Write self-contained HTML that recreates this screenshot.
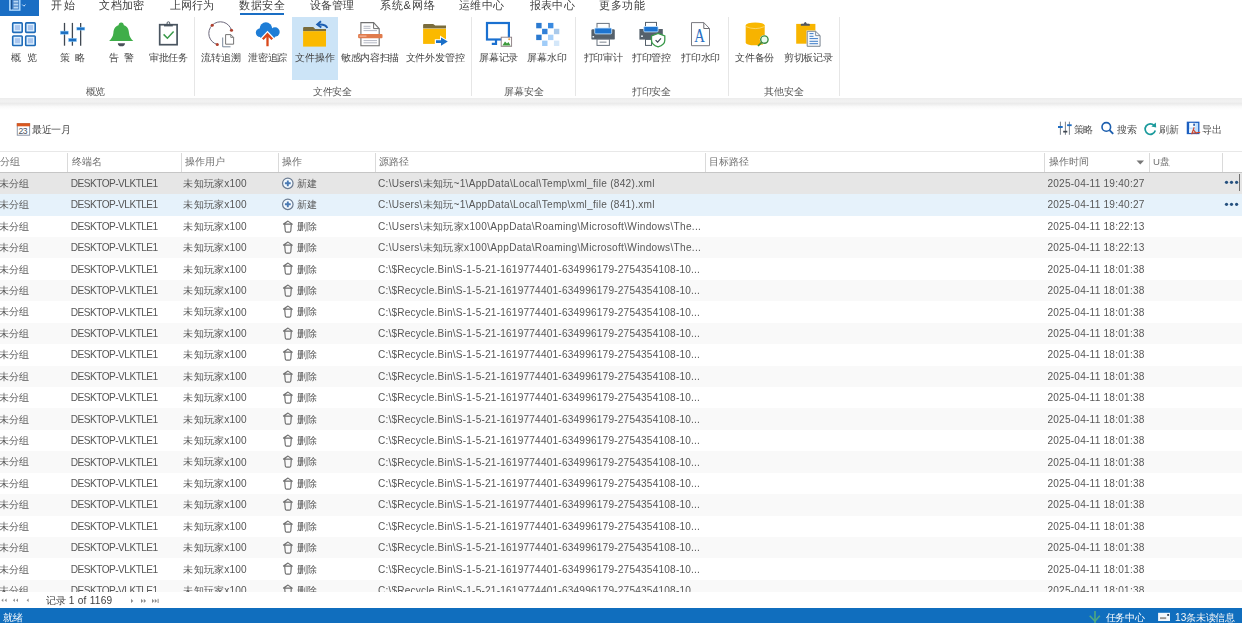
<!DOCTYPE html>
<html><head><meta charset="utf-8"><style>
*{margin:0;padding:0;box-sizing:border-box}
html,body{width:1242px;height:623px;overflow:hidden;background:#fff;font-family:'Liberation Sans', sans-serif;}
.a{position:absolute;white-space:nowrap}
.t{filter:grayscale(1)}
.sep{position:absolute;top:17px;height:79px;width:1px;background:#e6e6e6}
.hsep{position:absolute;top:153px;height:19px;width:1px;background:#dadada}
.row{position:absolute;left:0;width:1242px;height:21.43px;overflow:visible}
</style></head>
<body>
<div class="a" style="left:0;top:0;width:38.6px;height:15.5px;background:#1a6ec4"></div><svg class="a" style="left:0;top:0" width="39" height="16"><rect x="9.8" y="-2" width="10" height="12.1" fill="#3d7fc8" stroke="#b4ddff" stroke-width="1.4"/><line x1="11.6" y1="-1" x2="11.6" y2="9.4" stroke="#12407a" stroke-width="0.8"/><rect x="13.2" y="-1" width="5.3" height="10.3" fill="#5a90cc"/><g stroke="#b8d6f4" stroke-width="1.6"><line x1="13.6" y1="1.6" x2="18.2" y2="1.6"/><line x1="13.6" y1="4.6" x2="18.2" y2="4.6"/><line x1="13.6" y1="7.6" x2="18.2" y2="7.6"/></g><path d="M22.3 4.6l1.6 1.6 1.6-1.6" stroke="#cfe6ff" fill="none" stroke-width="1"/></svg><div class="a" style="left:240.2px;top:13.4px;width:43.8px;height:2px;background:#1a6ec4"></div><div class="a" style="left:292.4px;top:17.2px;width:45.8px;height:62.6px;background:#cce4f7"></div><div class="sep" style="left:194.3px"></div><div class="sep" style="left:471.4px"></div><div class="sep" style="left:575.0px"></div><div class="sep" style="left:727.9px"></div><div class="sep" style="left:838.8px"></div><div class="a" style="left:0;top:97.5px;width:1242px;height:8px;background:linear-gradient(#ececec,#f2f2f2 40%,#ebebeb 70%,#f6f6f6)"></div><div class="a" style="left:0;top:105.5px;width:1242px;height:4px;background:linear-gradient(#f8f8f8,#fff)"></div><div class="a" style="left:0;top:151px;width:1242px;height:1px;background:#e8e8e8"></div><div class="a" style="left:0;top:172px;width:1242px;height:1px;background:#c6c6c6"></div><div class="hsep" style="left:67.0px"></div><div class="hsep" style="left:180.8px"></div><div class="hsep" style="left:277.8px"></div><div class="hsep" style="left:375.0px"></div><div class="hsep" style="left:704.6px"></div><div class="hsep" style="left:1044.4px"></div><div class="hsep" style="left:1148.7px"></div><div class="hsep" style="left:1221.8px"></div><svg class="a" style="left:1136px;top:159.5px" width="9" height="5"><path d="M0.5 0.5h7.5l-3.75 4z" fill="#777"/></svg><div class="a" style="left:0;top:608px;width:1242px;height:15px;background:#106ebe"></div><div class="a" style="left:0;top:172.7px;width:1242px;height:419.6px;overflow:hidden"><div class="row" style="top:0.000px;background:#e6e6e6"><div class="a t" style="left:-1.18px;top:6.13px;font-size:9.65px;line-height:9.65px;letter-spacing:-0.117px;color:#575757;">未分组</div><div class="a t" style="left:70.80px;top:6.35px;font-size:10.1px;line-height:10.1px;letter-spacing:-0.515px;color:#575757;">DESKTOP-VLKTLE1</div><div class="a t" style="left:183.42px;top:6.13px;font-size:9.65px;line-height:9.65px;letter-spacing:0.355px;color:#575757;">未知玩家</div><div class="a t" style="left:224.30px;top:6.35px;font-size:10.1px;line-height:10.1px;letter-spacing:0.106px;color:#575757;">x100</div><div class="a t" style="left:297.32px;top:6.13px;font-size:9.65px;line-height:9.65px;letter-spacing:0.065px;color:#575757;">新建</div><div class="a t" style="left:378.00px;top:6.35px;font-size:10.1px;line-height:10.1px;letter-spacing:0.285px;color:#575757;">C:\Users\未知玩~1\AppData\Local\Temp\xml_file (842).xml</div><div class="a t" style="left:1047.39px;top:6.35px;font-size:10.1px;line-height:10.1px;letter-spacing:0.224px;color:#575757;">2025-04-11 19:40:27</div><svg class="a" style="left:281px;top:4px" width="14" height="14"><circle cx="6.8" cy="6.3" r="5.25" fill="#f2f9ff" stroke="#6c7c92" stroke-width="1.25"/><path d="M6.8 3.4v5.8M3.9 6.3h5.8" stroke="#4a7ab4" stroke-width="1.9"/></svg><svg class="a" style="left:1223px;top:7.8px" width="17" height="5"><circle cx="3.5" cy="2.3" r="1.6" fill="#25507e"/><circle cx="8.5" cy="2.3" r="1.6" fill="#25507e"/><circle cx="13.6" cy="2.3" r="1.6" fill="#25507e"/></svg></div><div class="row" style="top:21.430px;background:#e6f2fb"><div class="a t" style="left:-1.18px;top:6.13px;font-size:9.65px;line-height:9.65px;letter-spacing:-0.117px;color:#575757;">未分组</div><div class="a t" style="left:70.80px;top:6.35px;font-size:10.1px;line-height:10.1px;letter-spacing:-0.515px;color:#575757;">DESKTOP-VLKTLE1</div><div class="a t" style="left:183.42px;top:6.13px;font-size:9.65px;line-height:9.65px;letter-spacing:0.355px;color:#575757;">未知玩家</div><div class="a t" style="left:224.30px;top:6.35px;font-size:10.1px;line-height:10.1px;letter-spacing:0.106px;color:#575757;">x100</div><div class="a t" style="left:297.32px;top:6.13px;font-size:9.65px;line-height:9.65px;letter-spacing:0.065px;color:#575757;">新建</div><div class="a t" style="left:378.00px;top:6.35px;font-size:10.1px;line-height:10.1px;letter-spacing:0.285px;color:#575757;">C:\Users\未知玩~1\AppData\Local\Temp\xml_file (841).xml</div><div class="a t" style="left:1047.39px;top:6.35px;font-size:10.1px;line-height:10.1px;letter-spacing:0.224px;color:#575757;">2025-04-11 19:40:27</div><svg class="a" style="left:281px;top:4px" width="14" height="14"><circle cx="6.8" cy="6.3" r="5.25" fill="#f2f9ff" stroke="#6c7c92" stroke-width="1.25"/><path d="M6.8 3.4v5.8M3.9 6.3h5.8" stroke="#4a7ab4" stroke-width="1.9"/></svg><svg class="a" style="left:1223px;top:7.8px" width="17" height="5"><circle cx="3.5" cy="2.3" r="1.6" fill="#25507e"/><circle cx="8.5" cy="2.3" r="1.6" fill="#25507e"/><circle cx="13.6" cy="2.3" r="1.6" fill="#25507e"/></svg></div><div class="row" style="top:42.860px;background:#ffffff"><div class="a t" style="left:-1.18px;top:6.13px;font-size:9.65px;line-height:9.65px;letter-spacing:-0.117px;color:#575757;">未分组</div><div class="a t" style="left:70.80px;top:6.35px;font-size:10.1px;line-height:10.1px;letter-spacing:-0.515px;color:#575757;">DESKTOP-VLKTLE1</div><div class="a t" style="left:183.42px;top:6.13px;font-size:9.65px;line-height:9.65px;letter-spacing:0.355px;color:#575757;">未知玩家</div><div class="a t" style="left:224.30px;top:6.35px;font-size:10.1px;line-height:10.1px;letter-spacing:0.106px;color:#575757;">x100</div><div class="a t" style="left:297.32px;top:6.13px;font-size:9.65px;line-height:9.65px;letter-spacing:0.065px;color:#575757;">删除</div><div class="a t" style="left:378.00px;top:6.35px;font-size:10.1px;line-height:10.1px;letter-spacing:0.308px;color:#575757;">C:\Users\未知玩家x100\AppData\Roaming\Microsoft\Windows\The...</div><div class="a t" style="left:1047.39px;top:6.35px;font-size:10.1px;line-height:10.1px;letter-spacing:0.224px;color:#575757;">2025-04-11 18:22:13</div><svg class="a" style="left:280px;top:0" width="16" height="21"><g transform="translate(-280,0)" fill="none" stroke="#6e6e6e" stroke-width="1.15" stroke-linejoin="round"><path d="M283.5 8.1 L288 5.1 L292.3 8.1 Z"/><path d="M284.7 8.3 L285.3 15 Q285.5 16.1 286.6 16.1 H289.5 Q290.6 16.1 290.8 15 L291.3 8.3"/></g></svg></div><div class="row" style="top:64.290px;background:#f9f9f9"><div class="a t" style="left:-1.18px;top:6.13px;font-size:9.65px;line-height:9.65px;letter-spacing:-0.117px;color:#575757;">未分组</div><div class="a t" style="left:70.80px;top:6.35px;font-size:10.1px;line-height:10.1px;letter-spacing:-0.515px;color:#575757;">DESKTOP-VLKTLE1</div><div class="a t" style="left:183.42px;top:6.13px;font-size:9.65px;line-height:9.65px;letter-spacing:0.355px;color:#575757;">未知玩家</div><div class="a t" style="left:224.30px;top:6.35px;font-size:10.1px;line-height:10.1px;letter-spacing:0.106px;color:#575757;">x100</div><div class="a t" style="left:297.32px;top:6.13px;font-size:9.65px;line-height:9.65px;letter-spacing:0.065px;color:#575757;">删除</div><div class="a t" style="left:378.00px;top:6.35px;font-size:10.1px;line-height:10.1px;letter-spacing:0.308px;color:#575757;">C:\Users\未知玩家x100\AppData\Roaming\Microsoft\Windows\The...</div><div class="a t" style="left:1047.39px;top:6.35px;font-size:10.1px;line-height:10.1px;letter-spacing:0.224px;color:#575757;">2025-04-11 18:22:13</div><svg class="a" style="left:280px;top:0" width="16" height="21"><g transform="translate(-280,0)" fill="none" stroke="#6e6e6e" stroke-width="1.15" stroke-linejoin="round"><path d="M283.5 8.1 L288 5.1 L292.3 8.1 Z"/><path d="M284.7 8.3 L285.3 15 Q285.5 16.1 286.6 16.1 H289.5 Q290.6 16.1 290.8 15 L291.3 8.3"/></g></svg></div><div class="row" style="top:85.720px;background:#ffffff"><div class="a t" style="left:-1.18px;top:6.13px;font-size:9.65px;line-height:9.65px;letter-spacing:-0.117px;color:#575757;">未分组</div><div class="a t" style="left:70.80px;top:6.35px;font-size:10.1px;line-height:10.1px;letter-spacing:-0.515px;color:#575757;">DESKTOP-VLKTLE1</div><div class="a t" style="left:183.42px;top:6.13px;font-size:9.65px;line-height:9.65px;letter-spacing:0.355px;color:#575757;">未知玩家</div><div class="a t" style="left:224.30px;top:6.35px;font-size:10.1px;line-height:10.1px;letter-spacing:0.106px;color:#575757;">x100</div><div class="a t" style="left:297.32px;top:6.13px;font-size:9.65px;line-height:9.65px;letter-spacing:0.065px;color:#575757;">删除</div><div class="a t" style="left:378.00px;top:6.35px;font-size:10.1px;line-height:10.1px;letter-spacing:0.199px;color:#575757;">C:\$Recycle.Bin\S-1-5-21-1619774401-634996179-2754354108-10...</div><div class="a t" style="left:1047.39px;top:6.35px;font-size:10.1px;line-height:10.1px;letter-spacing:0.224px;color:#575757;">2025-04-11 18:01:38</div><svg class="a" style="left:280px;top:0" width="16" height="21"><g transform="translate(-280,0)" fill="none" stroke="#6e6e6e" stroke-width="1.15" stroke-linejoin="round"><path d="M283.5 8.1 L288 5.1 L292.3 8.1 Z"/><path d="M284.7 8.3 L285.3 15 Q285.5 16.1 286.6 16.1 H289.5 Q290.6 16.1 290.8 15 L291.3 8.3"/></g></svg></div><div class="row" style="top:107.150px;background:#f9f9f9"><div class="a t" style="left:-1.18px;top:6.13px;font-size:9.65px;line-height:9.65px;letter-spacing:-0.117px;color:#575757;">未分组</div><div class="a t" style="left:70.80px;top:6.35px;font-size:10.1px;line-height:10.1px;letter-spacing:-0.515px;color:#575757;">DESKTOP-VLKTLE1</div><div class="a t" style="left:183.42px;top:6.13px;font-size:9.65px;line-height:9.65px;letter-spacing:0.355px;color:#575757;">未知玩家</div><div class="a t" style="left:224.30px;top:6.35px;font-size:10.1px;line-height:10.1px;letter-spacing:0.106px;color:#575757;">x100</div><div class="a t" style="left:297.32px;top:6.13px;font-size:9.65px;line-height:9.65px;letter-spacing:0.065px;color:#575757;">删除</div><div class="a t" style="left:378.00px;top:6.35px;font-size:10.1px;line-height:10.1px;letter-spacing:0.199px;color:#575757;">C:\$Recycle.Bin\S-1-5-21-1619774401-634996179-2754354108-10...</div><div class="a t" style="left:1047.39px;top:6.35px;font-size:10.1px;line-height:10.1px;letter-spacing:0.224px;color:#575757;">2025-04-11 18:01:38</div><svg class="a" style="left:280px;top:0" width="16" height="21"><g transform="translate(-280,0)" fill="none" stroke="#6e6e6e" stroke-width="1.15" stroke-linejoin="round"><path d="M283.5 8.1 L288 5.1 L292.3 8.1 Z"/><path d="M284.7 8.3 L285.3 15 Q285.5 16.1 286.6 16.1 H289.5 Q290.6 16.1 290.8 15 L291.3 8.3"/></g></svg></div><div class="row" style="top:128.580px;background:#ffffff"><div class="a t" style="left:-1.18px;top:6.13px;font-size:9.65px;line-height:9.65px;letter-spacing:-0.117px;color:#575757;">未分组</div><div class="a t" style="left:70.80px;top:6.35px;font-size:10.1px;line-height:10.1px;letter-spacing:-0.515px;color:#575757;">DESKTOP-VLKTLE1</div><div class="a t" style="left:183.42px;top:6.13px;font-size:9.65px;line-height:9.65px;letter-spacing:0.355px;color:#575757;">未知玩家</div><div class="a t" style="left:224.30px;top:6.35px;font-size:10.1px;line-height:10.1px;letter-spacing:0.106px;color:#575757;">x100</div><div class="a t" style="left:297.32px;top:6.13px;font-size:9.65px;line-height:9.65px;letter-spacing:0.065px;color:#575757;">删除</div><div class="a t" style="left:378.00px;top:6.35px;font-size:10.1px;line-height:10.1px;letter-spacing:0.199px;color:#575757;">C:\$Recycle.Bin\S-1-5-21-1619774401-634996179-2754354108-10...</div><div class="a t" style="left:1047.39px;top:6.35px;font-size:10.1px;line-height:10.1px;letter-spacing:0.224px;color:#575757;">2025-04-11 18:01:38</div><svg class="a" style="left:280px;top:0" width="16" height="21"><g transform="translate(-280,0)" fill="none" stroke="#6e6e6e" stroke-width="1.15" stroke-linejoin="round"><path d="M283.5 8.1 L288 5.1 L292.3 8.1 Z"/><path d="M284.7 8.3 L285.3 15 Q285.5 16.1 286.6 16.1 H289.5 Q290.6 16.1 290.8 15 L291.3 8.3"/></g></svg></div><div class="row" style="top:150.010px;background:#f9f9f9"><div class="a t" style="left:-1.18px;top:6.13px;font-size:9.65px;line-height:9.65px;letter-spacing:-0.117px;color:#575757;">未分组</div><div class="a t" style="left:70.80px;top:6.35px;font-size:10.1px;line-height:10.1px;letter-spacing:-0.515px;color:#575757;">DESKTOP-VLKTLE1</div><div class="a t" style="left:183.42px;top:6.13px;font-size:9.65px;line-height:9.65px;letter-spacing:0.355px;color:#575757;">未知玩家</div><div class="a t" style="left:224.30px;top:6.35px;font-size:10.1px;line-height:10.1px;letter-spacing:0.106px;color:#575757;">x100</div><div class="a t" style="left:297.32px;top:6.13px;font-size:9.65px;line-height:9.65px;letter-spacing:0.065px;color:#575757;">删除</div><div class="a t" style="left:378.00px;top:6.35px;font-size:10.1px;line-height:10.1px;letter-spacing:0.199px;color:#575757;">C:\$Recycle.Bin\S-1-5-21-1619774401-634996179-2754354108-10...</div><div class="a t" style="left:1047.39px;top:6.35px;font-size:10.1px;line-height:10.1px;letter-spacing:0.224px;color:#575757;">2025-04-11 18:01:38</div><svg class="a" style="left:280px;top:0" width="16" height="21"><g transform="translate(-280,0)" fill="none" stroke="#6e6e6e" stroke-width="1.15" stroke-linejoin="round"><path d="M283.5 8.1 L288 5.1 L292.3 8.1 Z"/><path d="M284.7 8.3 L285.3 15 Q285.5 16.1 286.6 16.1 H289.5 Q290.6 16.1 290.8 15 L291.3 8.3"/></g></svg></div><div class="row" style="top:171.440px;background:#ffffff"><div class="a t" style="left:-1.18px;top:6.13px;font-size:9.65px;line-height:9.65px;letter-spacing:-0.117px;color:#575757;">未分组</div><div class="a t" style="left:70.80px;top:6.35px;font-size:10.1px;line-height:10.1px;letter-spacing:-0.515px;color:#575757;">DESKTOP-VLKTLE1</div><div class="a t" style="left:183.42px;top:6.13px;font-size:9.65px;line-height:9.65px;letter-spacing:0.355px;color:#575757;">未知玩家</div><div class="a t" style="left:224.30px;top:6.35px;font-size:10.1px;line-height:10.1px;letter-spacing:0.106px;color:#575757;">x100</div><div class="a t" style="left:297.32px;top:6.13px;font-size:9.65px;line-height:9.65px;letter-spacing:0.065px;color:#575757;">删除</div><div class="a t" style="left:378.00px;top:6.35px;font-size:10.1px;line-height:10.1px;letter-spacing:0.199px;color:#575757;">C:\$Recycle.Bin\S-1-5-21-1619774401-634996179-2754354108-10...</div><div class="a t" style="left:1047.39px;top:6.35px;font-size:10.1px;line-height:10.1px;letter-spacing:0.224px;color:#575757;">2025-04-11 18:01:38</div><svg class="a" style="left:280px;top:0" width="16" height="21"><g transform="translate(-280,0)" fill="none" stroke="#6e6e6e" stroke-width="1.15" stroke-linejoin="round"><path d="M283.5 8.1 L288 5.1 L292.3 8.1 Z"/><path d="M284.7 8.3 L285.3 15 Q285.5 16.1 286.6 16.1 H289.5 Q290.6 16.1 290.8 15 L291.3 8.3"/></g></svg></div><div class="row" style="top:192.870px;background:#f9f9f9"><div class="a t" style="left:-1.18px;top:6.13px;font-size:9.65px;line-height:9.65px;letter-spacing:-0.117px;color:#575757;">未分组</div><div class="a t" style="left:70.80px;top:6.35px;font-size:10.1px;line-height:10.1px;letter-spacing:-0.515px;color:#575757;">DESKTOP-VLKTLE1</div><div class="a t" style="left:183.42px;top:6.13px;font-size:9.65px;line-height:9.65px;letter-spacing:0.355px;color:#575757;">未知玩家</div><div class="a t" style="left:224.30px;top:6.35px;font-size:10.1px;line-height:10.1px;letter-spacing:0.106px;color:#575757;">x100</div><div class="a t" style="left:297.32px;top:6.13px;font-size:9.65px;line-height:9.65px;letter-spacing:0.065px;color:#575757;">删除</div><div class="a t" style="left:378.00px;top:6.35px;font-size:10.1px;line-height:10.1px;letter-spacing:0.199px;color:#575757;">C:\$Recycle.Bin\S-1-5-21-1619774401-634996179-2754354108-10...</div><div class="a t" style="left:1047.39px;top:6.35px;font-size:10.1px;line-height:10.1px;letter-spacing:0.224px;color:#575757;">2025-04-11 18:01:38</div><svg class="a" style="left:280px;top:0" width="16" height="21"><g transform="translate(-280,0)" fill="none" stroke="#6e6e6e" stroke-width="1.15" stroke-linejoin="round"><path d="M283.5 8.1 L288 5.1 L292.3 8.1 Z"/><path d="M284.7 8.3 L285.3 15 Q285.5 16.1 286.6 16.1 H289.5 Q290.6 16.1 290.8 15 L291.3 8.3"/></g></svg></div><div class="row" style="top:214.300px;background:#ffffff"><div class="a t" style="left:-1.18px;top:6.13px;font-size:9.65px;line-height:9.65px;letter-spacing:-0.117px;color:#575757;">未分组</div><div class="a t" style="left:70.80px;top:6.35px;font-size:10.1px;line-height:10.1px;letter-spacing:-0.515px;color:#575757;">DESKTOP-VLKTLE1</div><div class="a t" style="left:183.42px;top:6.13px;font-size:9.65px;line-height:9.65px;letter-spacing:0.355px;color:#575757;">未知玩家</div><div class="a t" style="left:224.30px;top:6.35px;font-size:10.1px;line-height:10.1px;letter-spacing:0.106px;color:#575757;">x100</div><div class="a t" style="left:297.32px;top:6.13px;font-size:9.65px;line-height:9.65px;letter-spacing:0.065px;color:#575757;">删除</div><div class="a t" style="left:378.00px;top:6.35px;font-size:10.1px;line-height:10.1px;letter-spacing:0.199px;color:#575757;">C:\$Recycle.Bin\S-1-5-21-1619774401-634996179-2754354108-10...</div><div class="a t" style="left:1047.39px;top:6.35px;font-size:10.1px;line-height:10.1px;letter-spacing:0.224px;color:#575757;">2025-04-11 18:01:38</div><svg class="a" style="left:280px;top:0" width="16" height="21"><g transform="translate(-280,0)" fill="none" stroke="#6e6e6e" stroke-width="1.15" stroke-linejoin="round"><path d="M283.5 8.1 L288 5.1 L292.3 8.1 Z"/><path d="M284.7 8.3 L285.3 15 Q285.5 16.1 286.6 16.1 H289.5 Q290.6 16.1 290.8 15 L291.3 8.3"/></g></svg></div><div class="row" style="top:235.730px;background:#f9f9f9"><div class="a t" style="left:-1.18px;top:6.13px;font-size:9.65px;line-height:9.65px;letter-spacing:-0.117px;color:#575757;">未分组</div><div class="a t" style="left:70.80px;top:6.35px;font-size:10.1px;line-height:10.1px;letter-spacing:-0.515px;color:#575757;">DESKTOP-VLKTLE1</div><div class="a t" style="left:183.42px;top:6.13px;font-size:9.65px;line-height:9.65px;letter-spacing:0.355px;color:#575757;">未知玩家</div><div class="a t" style="left:224.30px;top:6.35px;font-size:10.1px;line-height:10.1px;letter-spacing:0.106px;color:#575757;">x100</div><div class="a t" style="left:297.32px;top:6.13px;font-size:9.65px;line-height:9.65px;letter-spacing:0.065px;color:#575757;">删除</div><div class="a t" style="left:378.00px;top:6.35px;font-size:10.1px;line-height:10.1px;letter-spacing:0.199px;color:#575757;">C:\$Recycle.Bin\S-1-5-21-1619774401-634996179-2754354108-10...</div><div class="a t" style="left:1047.39px;top:6.35px;font-size:10.1px;line-height:10.1px;letter-spacing:0.224px;color:#575757;">2025-04-11 18:01:38</div><svg class="a" style="left:280px;top:0" width="16" height="21"><g transform="translate(-280,0)" fill="none" stroke="#6e6e6e" stroke-width="1.15" stroke-linejoin="round"><path d="M283.5 8.1 L288 5.1 L292.3 8.1 Z"/><path d="M284.7 8.3 L285.3 15 Q285.5 16.1 286.6 16.1 H289.5 Q290.6 16.1 290.8 15 L291.3 8.3"/></g></svg></div><div class="row" style="top:257.160px;background:#ffffff"><div class="a t" style="left:-1.18px;top:6.13px;font-size:9.65px;line-height:9.65px;letter-spacing:-0.117px;color:#575757;">未分组</div><div class="a t" style="left:70.80px;top:6.35px;font-size:10.1px;line-height:10.1px;letter-spacing:-0.515px;color:#575757;">DESKTOP-VLKTLE1</div><div class="a t" style="left:183.42px;top:6.13px;font-size:9.65px;line-height:9.65px;letter-spacing:0.355px;color:#575757;">未知玩家</div><div class="a t" style="left:224.30px;top:6.35px;font-size:10.1px;line-height:10.1px;letter-spacing:0.106px;color:#575757;">x100</div><div class="a t" style="left:297.32px;top:6.13px;font-size:9.65px;line-height:9.65px;letter-spacing:0.065px;color:#575757;">删除</div><div class="a t" style="left:378.00px;top:6.35px;font-size:10.1px;line-height:10.1px;letter-spacing:0.199px;color:#575757;">C:\$Recycle.Bin\S-1-5-21-1619774401-634996179-2754354108-10...</div><div class="a t" style="left:1047.39px;top:6.35px;font-size:10.1px;line-height:10.1px;letter-spacing:0.224px;color:#575757;">2025-04-11 18:01:38</div><svg class="a" style="left:280px;top:0" width="16" height="21"><g transform="translate(-280,0)" fill="none" stroke="#6e6e6e" stroke-width="1.15" stroke-linejoin="round"><path d="M283.5 8.1 L288 5.1 L292.3 8.1 Z"/><path d="M284.7 8.3 L285.3 15 Q285.5 16.1 286.6 16.1 H289.5 Q290.6 16.1 290.8 15 L291.3 8.3"/></g></svg></div><div class="row" style="top:278.590px;background:#f9f9f9"><div class="a t" style="left:-1.18px;top:6.13px;font-size:9.65px;line-height:9.65px;letter-spacing:-0.117px;color:#575757;">未分组</div><div class="a t" style="left:70.80px;top:6.35px;font-size:10.1px;line-height:10.1px;letter-spacing:-0.515px;color:#575757;">DESKTOP-VLKTLE1</div><div class="a t" style="left:183.42px;top:6.13px;font-size:9.65px;line-height:9.65px;letter-spacing:0.355px;color:#575757;">未知玩家</div><div class="a t" style="left:224.30px;top:6.35px;font-size:10.1px;line-height:10.1px;letter-spacing:0.106px;color:#575757;">x100</div><div class="a t" style="left:297.32px;top:6.13px;font-size:9.65px;line-height:9.65px;letter-spacing:0.065px;color:#575757;">删除</div><div class="a t" style="left:378.00px;top:6.35px;font-size:10.1px;line-height:10.1px;letter-spacing:0.199px;color:#575757;">C:\$Recycle.Bin\S-1-5-21-1619774401-634996179-2754354108-10...</div><div class="a t" style="left:1047.39px;top:6.35px;font-size:10.1px;line-height:10.1px;letter-spacing:0.224px;color:#575757;">2025-04-11 18:01:38</div><svg class="a" style="left:280px;top:0" width="16" height="21"><g transform="translate(-280,0)" fill="none" stroke="#6e6e6e" stroke-width="1.15" stroke-linejoin="round"><path d="M283.5 8.1 L288 5.1 L292.3 8.1 Z"/><path d="M284.7 8.3 L285.3 15 Q285.5 16.1 286.6 16.1 H289.5 Q290.6 16.1 290.8 15 L291.3 8.3"/></g></svg></div><div class="row" style="top:300.020px;background:#ffffff"><div class="a t" style="left:-1.18px;top:6.13px;font-size:9.65px;line-height:9.65px;letter-spacing:-0.117px;color:#575757;">未分组</div><div class="a t" style="left:70.80px;top:6.35px;font-size:10.1px;line-height:10.1px;letter-spacing:-0.515px;color:#575757;">DESKTOP-VLKTLE1</div><div class="a t" style="left:183.42px;top:6.13px;font-size:9.65px;line-height:9.65px;letter-spacing:0.355px;color:#575757;">未知玩家</div><div class="a t" style="left:224.30px;top:6.35px;font-size:10.1px;line-height:10.1px;letter-spacing:0.106px;color:#575757;">x100</div><div class="a t" style="left:297.32px;top:6.13px;font-size:9.65px;line-height:9.65px;letter-spacing:0.065px;color:#575757;">删除</div><div class="a t" style="left:378.00px;top:6.35px;font-size:10.1px;line-height:10.1px;letter-spacing:0.199px;color:#575757;">C:\$Recycle.Bin\S-1-5-21-1619774401-634996179-2754354108-10...</div><div class="a t" style="left:1047.39px;top:6.35px;font-size:10.1px;line-height:10.1px;letter-spacing:0.224px;color:#575757;">2025-04-11 18:01:38</div><svg class="a" style="left:280px;top:0" width="16" height="21"><g transform="translate(-280,0)" fill="none" stroke="#6e6e6e" stroke-width="1.15" stroke-linejoin="round"><path d="M283.5 8.1 L288 5.1 L292.3 8.1 Z"/><path d="M284.7 8.3 L285.3 15 Q285.5 16.1 286.6 16.1 H289.5 Q290.6 16.1 290.8 15 L291.3 8.3"/></g></svg></div><div class="row" style="top:321.450px;background:#f9f9f9"><div class="a t" style="left:-1.18px;top:6.13px;font-size:9.65px;line-height:9.65px;letter-spacing:-0.117px;color:#575757;">未分组</div><div class="a t" style="left:70.80px;top:6.35px;font-size:10.1px;line-height:10.1px;letter-spacing:-0.515px;color:#575757;">DESKTOP-VLKTLE1</div><div class="a t" style="left:183.42px;top:6.13px;font-size:9.65px;line-height:9.65px;letter-spacing:0.355px;color:#575757;">未知玩家</div><div class="a t" style="left:224.30px;top:6.35px;font-size:10.1px;line-height:10.1px;letter-spacing:0.106px;color:#575757;">x100</div><div class="a t" style="left:297.32px;top:6.13px;font-size:9.65px;line-height:9.65px;letter-spacing:0.065px;color:#575757;">删除</div><div class="a t" style="left:378.00px;top:6.35px;font-size:10.1px;line-height:10.1px;letter-spacing:0.199px;color:#575757;">C:\$Recycle.Bin\S-1-5-21-1619774401-634996179-2754354108-10...</div><div class="a t" style="left:1047.39px;top:6.35px;font-size:10.1px;line-height:10.1px;letter-spacing:0.224px;color:#575757;">2025-04-11 18:01:38</div><svg class="a" style="left:280px;top:0" width="16" height="21"><g transform="translate(-280,0)" fill="none" stroke="#6e6e6e" stroke-width="1.15" stroke-linejoin="round"><path d="M283.5 8.1 L288 5.1 L292.3 8.1 Z"/><path d="M284.7 8.3 L285.3 15 Q285.5 16.1 286.6 16.1 H289.5 Q290.6 16.1 290.8 15 L291.3 8.3"/></g></svg></div><div class="row" style="top:342.880px;background:#ffffff"><div class="a t" style="left:-1.18px;top:6.13px;font-size:9.65px;line-height:9.65px;letter-spacing:-0.117px;color:#575757;">未分组</div><div class="a t" style="left:70.80px;top:6.35px;font-size:10.1px;line-height:10.1px;letter-spacing:-0.515px;color:#575757;">DESKTOP-VLKTLE1</div><div class="a t" style="left:183.42px;top:6.13px;font-size:9.65px;line-height:9.65px;letter-spacing:0.355px;color:#575757;">未知玩家</div><div class="a t" style="left:224.30px;top:6.35px;font-size:10.1px;line-height:10.1px;letter-spacing:0.106px;color:#575757;">x100</div><div class="a t" style="left:297.32px;top:6.13px;font-size:9.65px;line-height:9.65px;letter-spacing:0.065px;color:#575757;">删除</div><div class="a t" style="left:378.00px;top:6.35px;font-size:10.1px;line-height:10.1px;letter-spacing:0.199px;color:#575757;">C:\$Recycle.Bin\S-1-5-21-1619774401-634996179-2754354108-10...</div><div class="a t" style="left:1047.39px;top:6.35px;font-size:10.1px;line-height:10.1px;letter-spacing:0.224px;color:#575757;">2025-04-11 18:01:38</div><svg class="a" style="left:280px;top:0" width="16" height="21"><g transform="translate(-280,0)" fill="none" stroke="#6e6e6e" stroke-width="1.15" stroke-linejoin="round"><path d="M283.5 8.1 L288 5.1 L292.3 8.1 Z"/><path d="M284.7 8.3 L285.3 15 Q285.5 16.1 286.6 16.1 H289.5 Q290.6 16.1 290.8 15 L291.3 8.3"/></g></svg></div><div class="row" style="top:364.310px;background:#f9f9f9"><div class="a t" style="left:-1.18px;top:6.13px;font-size:9.65px;line-height:9.65px;letter-spacing:-0.117px;color:#575757;">未分组</div><div class="a t" style="left:70.80px;top:6.35px;font-size:10.1px;line-height:10.1px;letter-spacing:-0.515px;color:#575757;">DESKTOP-VLKTLE1</div><div class="a t" style="left:183.42px;top:6.13px;font-size:9.65px;line-height:9.65px;letter-spacing:0.355px;color:#575757;">未知玩家</div><div class="a t" style="left:224.30px;top:6.35px;font-size:10.1px;line-height:10.1px;letter-spacing:0.106px;color:#575757;">x100</div><div class="a t" style="left:297.32px;top:6.13px;font-size:9.65px;line-height:9.65px;letter-spacing:0.065px;color:#575757;">删除</div><div class="a t" style="left:378.00px;top:6.35px;font-size:10.1px;line-height:10.1px;letter-spacing:0.199px;color:#575757;">C:\$Recycle.Bin\S-1-5-21-1619774401-634996179-2754354108-10...</div><div class="a t" style="left:1047.39px;top:6.35px;font-size:10.1px;line-height:10.1px;letter-spacing:0.224px;color:#575757;">2025-04-11 18:01:38</div><svg class="a" style="left:280px;top:0" width="16" height="21"><g transform="translate(-280,0)" fill="none" stroke="#6e6e6e" stroke-width="1.15" stroke-linejoin="round"><path d="M283.5 8.1 L288 5.1 L292.3 8.1 Z"/><path d="M284.7 8.3 L285.3 15 Q285.5 16.1 286.6 16.1 H289.5 Q290.6 16.1 290.8 15 L291.3 8.3"/></g></svg></div><div class="row" style="top:385.740px;background:#ffffff"><div class="a t" style="left:-1.18px;top:6.13px;font-size:9.65px;line-height:9.65px;letter-spacing:-0.117px;color:#575757;">未分组</div><div class="a t" style="left:70.80px;top:6.35px;font-size:10.1px;line-height:10.1px;letter-spacing:-0.515px;color:#575757;">DESKTOP-VLKTLE1</div><div class="a t" style="left:183.42px;top:6.13px;font-size:9.65px;line-height:9.65px;letter-spacing:0.355px;color:#575757;">未知玩家</div><div class="a t" style="left:224.30px;top:6.35px;font-size:10.1px;line-height:10.1px;letter-spacing:0.106px;color:#575757;">x100</div><div class="a t" style="left:297.32px;top:6.13px;font-size:9.65px;line-height:9.65px;letter-spacing:0.065px;color:#575757;">删除</div><div class="a t" style="left:378.00px;top:6.35px;font-size:10.1px;line-height:10.1px;letter-spacing:0.199px;color:#575757;">C:\$Recycle.Bin\S-1-5-21-1619774401-634996179-2754354108-10...</div><div class="a t" style="left:1047.39px;top:6.35px;font-size:10.1px;line-height:10.1px;letter-spacing:0.224px;color:#575757;">2025-04-11 18:01:38</div><svg class="a" style="left:280px;top:0" width="16" height="21"><g transform="translate(-280,0)" fill="none" stroke="#6e6e6e" stroke-width="1.15" stroke-linejoin="round"><path d="M283.5 8.1 L288 5.1 L292.3 8.1 Z"/><path d="M284.7 8.3 L285.3 15 Q285.5 16.1 286.6 16.1 H289.5 Q290.6 16.1 290.8 15 L291.3 8.3"/></g></svg></div><div class="row" style="top:407.170px;background:#f9f9f9"><div class="a t" style="left:-1.18px;top:6.13px;font-size:9.65px;line-height:9.65px;letter-spacing:-0.117px;color:#575757;">未分组</div><div class="a t" style="left:70.80px;top:6.35px;font-size:10.1px;line-height:10.1px;letter-spacing:-0.515px;color:#575757;">DESKTOP-VLKTLE1</div><div class="a t" style="left:183.42px;top:6.13px;font-size:9.65px;line-height:9.65px;letter-spacing:0.355px;color:#575757;">未知玩家</div><div class="a t" style="left:224.30px;top:6.35px;font-size:10.1px;line-height:10.1px;letter-spacing:0.106px;color:#575757;">x100</div><div class="a t" style="left:297.32px;top:6.13px;font-size:9.65px;line-height:9.65px;letter-spacing:0.065px;color:#575757;">删除</div><div class="a t" style="left:378.00px;top:6.35px;font-size:10.1px;line-height:10.1px;letter-spacing:0.199px;color:#575757;">C:\$Recycle.Bin\S-1-5-21-1619774401-634996179-2754354108-10...</div><div class="a t" style="left:1047.39px;top:6.35px;font-size:10.1px;line-height:10.1px;letter-spacing:0.224px;color:#575757;">2025-04-11 18:01:38</div><svg class="a" style="left:280px;top:0" width="16" height="21"><g transform="translate(-280,0)" fill="none" stroke="#6e6e6e" stroke-width="1.15" stroke-linejoin="round"><path d="M283.5 8.1 L288 5.1 L292.3 8.1 Z"/><path d="M284.7 8.3 L285.3 15 Q285.5 16.1 286.6 16.1 H289.5 Q290.6 16.1 290.8 15 L291.3 8.3"/></g></svg></div></div><div class="a" style="left:1239.2px;top:174.2px;width:1.3px;height:16.5px;background:#707070"></div><svg class="a" style="left:0;top:0" width="1242" height="100"><rect x="12.700000000000001" y="22.900000000000002" width="9.5" height="9.5" rx="0.8" fill="#dff0ff" stroke="#1f6bb8" stroke-width="1.6"/><rect x="14.9" y="25.1" width="5.1" height="5.1" fill="#a9c6ee"/><rect x="25.7" y="22.900000000000002" width="9.5" height="9.5" rx="0.8" fill="#dff0ff" stroke="#1f6bb8" stroke-width="1.6"/><rect x="27.9" y="25.1" width="5.1" height="5.1" fill="#a9c6ee"/><rect x="12.700000000000001" y="36.0" width="9.5" height="9.5" rx="0.8" fill="#dff0ff" stroke="#1f6bb8" stroke-width="1.6"/><rect x="14.9" y="38.2" width="5.1" height="5.1" fill="#a9c6ee"/><rect x="25.7" y="36.0" width="9.5" height="9.5" rx="0.8" fill="#dff0ff" stroke="#1f6bb8" stroke-width="1.6"/><rect x="27.9" y="38.2" width="5.1" height="5.1" fill="#a9c6ee"/><line x1="64.5" y1="22.9" x2="64.5" y2="45.7" stroke="#3f4852" stroke-width="1.3"/><line x1="72.4" y1="22.9" x2="72.4" y2="45.7" stroke="#3f4852" stroke-width="1.3"/><line x1="80.65" y1="22.9" x2="80.65" y2="45.7" stroke="#3f4852" stroke-width="1.3"/><rect x="60.4" y="31.1" width="7.899999999999999" height="3.1000000000000014" fill="#1c6fc2" stroke="#8fd0ff" stroke-width="0.5"/><rect x="68.6" y="38.3" width="7.900000000000006" height="3.3000000000000043" fill="#1c6fc2" stroke="#8fd0ff" stroke-width="0.5"/><rect x="76.8" y="27.2" width="8.0" height="2.900000000000002" fill="#1c6fc2" stroke="#8fd0ff" stroke-width="0.5"/><path d="M121.2 22.4 C119.4 22.4 118.8 23.8 118.5 25.2 C114.8 26.4 113.6 29.4 113.4 33 C113.1 36.5 111.3 38.9 109.1 41.1 L133.3 41.1 C131.1 38.9 129.3 36.5 129 33 C128.8 29.4 127.6 26.4 123.9 25.2 C123.6 23.8 123 22.4 121.2 22.4Z" fill="#3fae49"/><path d="M117.8 43.2 A3.6 3.1 0 0 0 125 43.2 Z" fill="#4a505a"/><rect x="159.7" y="24.7" width="17.4" height="20" fill="#fff" stroke="#4a5560" stroke-width="1.7"/><rect x="164" y="24.2" width="8.8" height="2.2" fill="#4a5560"/><circle cx="168.4" cy="23.2" r="1.4" fill="none" stroke="#4a5560" stroke-width="1"/><path d="M163.6 34.4 L167.4 38.2 L173.6 31.6" fill="none" stroke="#3a9a4a" stroke-width="1.5"/><path d="M212.2 25.2 A11.55 11.55 0 0 1 231.5 30.3" fill="none" stroke="#6c687c" stroke-width="1"/><path d="M212.2 25.2 A11.55 11.55 0 0 0 217.3 44.5" fill="none" stroke="#6c687c" stroke-width="1"/><circle cx="212.2" cy="25.2" r="1.55" fill="#b0402e"/><circle cx="231.5" cy="30.3" r="1.55" fill="#b0402e"/><circle cx="217.3" cy="44.5" r="1.55" fill="#b0402e"/><path d="M222.7 37.5 V46.8 H230.5" fill="none" stroke="#6a7a90" stroke-width="0.9"/><path d="M225.6 34.6 H230.8 L233.6 37.4 V44.2 H225.6 Z" fill="#fff" stroke="#666" stroke-width="0.9"/><path d="M230.8 34.6 V37.4 H233.6" fill="none" stroke="#666" stroke-width="0.8"/><g fill="#1e7dd6"><circle cx="265.9" cy="28.6" r="6.3"/><circle cx="275.0" cy="32.0" r="4.7"/><circle cx="260.0" cy="32.8" r="4.2"/><rect x="260" y="31" width="15" height="6.6"/></g><path d="M262.8 39.2 L267.5 34.2 L272.2 39.2 M267.5 34.6 V46.3" fill="none" stroke="#fff" stroke-width="4.6" stroke-linejoin="miter"/><path d="M262.8 39.2 L267.5 34.2 L272.2 39.2 M267.5 34.6 V46.3" fill="none" stroke="#d9481a" stroke-width="2.3" stroke-linejoin="miter"/><path d="M303.1 31.2 V27.9 Q303.1 26.9 304.1 26.9 H313.2 L315.2 28.9 H326 V31.2 Z" fill="#7a6c3c"/><rect x="303.1" y="31.2" width="22.9" height="15.4" fill="#fbb900"/><path d="M327.3 28 Q325.8 24 318.5 24.5" fill="none" stroke="#1c5fb2" stroke-width="1.9"/><path d="M321 21.2 L317.2 24.5 L321.3 27.6" fill="none" stroke="#1c5fb2" stroke-width="1.9"/><path d="M360.9 22.6 H373.6 L379.2 28.6 V45.7 H360.9 Z" fill="#fff" stroke="#707070" stroke-width="1.1"/><path d="M373.6 22.6 V28.6 H379.2" fill="none" stroke="#707070" stroke-width="1"/><g stroke="#b4b8c4" stroke-width="1"><line x1="363.5" y1="26.3" x2="370.5" y2="26.3"/><line x1="363.5" y1="28.3" x2="370.5" y2="28.3"/><line x1="363.5" y1="30.6" x2="377" y2="30.6"/><line x1="363.5" y1="40.6" x2="377" y2="40.6"/><line x1="363.5" y1="42.8" x2="377" y2="42.8"/></g><rect x="358.1" y="33.9" width="24.4" height="4.4" rx="1" fill="#e07b4c"/><line x1="359.5" y1="36.1" x2="366.5" y2="36.1" stroke="#ffd8c8" stroke-width="0.8"/><path d="M423.1 28.6 V24.9 Q423.1 23.9 424.1 23.9 H433.2 L435.2 25.6 H446 V28.6 Z" fill="#7a6c3c"/><rect x="423.1" y="28.8" width="22.9" height="15.1" fill="#fbb900"/><path d="M434.8 39.2 H440 V35.6 L449.2 41.6 L440 47.6 V44 H434.8 Z" fill="#fff"/><path d="M436 40.2 H441 V37.4 L447.8 41.6 L441 45.8 V43 H436 Z" fill="#1a6fc8"/><rect x="487" y="23" width="21.9" height="16.5" fill="none" stroke="#1a70d0" stroke-width="2.2"/><path d="M496 39.5 V43.9 H491.8" fill="none" stroke="#1a70d0" stroke-width="2.2"/><rect x="501.2" y="37.2" width="10.4" height="9.1" fill="#fff" stroke="#8a7c80" stroke-width="0.9"/><path d="M502.4 45.4 L505 41.4 L507 43.6 L508.4 42 L510.6 45.4 Z" fill="#3c9a3c"/><circle cx="509.2" cy="39.3" r="1" fill="#f0a040"/><rect x="536.20" y="22.90" width="5.4" height="5.4" fill="#2b7ad0"/><rect x="548.00" y="22.90" width="5.4" height="5.4" fill="#3a8ae0"/><rect x="542.10" y="28.80" width="5.4" height="5.4" fill="#3080d8"/><rect x="553.90" y="28.80" width="5.4" height="5.4" fill="#a9c9ea"/><rect x="536.20" y="34.70" width="5.4" height="5.4" fill="#2b7ad0"/><rect x="548.00" y="34.70" width="5.4" height="5.4" fill="#a8d0f8"/><rect x="542.10" y="40.60" width="5.4" height="5.4" fill="#a0ccf8"/><rect x="553.90" y="40.60" width="5.4" height="5.4" fill="#d4e7f9"/><g transform="translate(0,0)"><rect x="597" y="23.4" width="12.2" height="6" fill="#fff" stroke="#6a7480" stroke-width="1"/><rect x="591.4" y="29.3" width="23.4" height="10.3" rx="1.2" fill="#55606b"/><rect x="594.7" y="28" width="17" height="5.9" rx="1" fill="#1d74d0" stroke="#cfeaff" stroke-width="0.8"/><rect x="597" y="39.2" width="12.4" height="6.2" fill="#fff" stroke="#6a7480" stroke-width="1"/><line x1="599.5" y1="42.2" x2="606.5" y2="42.2" stroke="#a0a6ae" stroke-width="1.4"/><rect x="592.5" y="36" width="1.6" height="1.5" fill="#e8f0f8"/></g><rect x="645.5" y="22.4" width="11" height="5" fill="#fff" stroke="#55606b" stroke-width="1"/><path d="M639.4 29 H662.8 V39.6 H639.4 Z" fill="#55606b"/><rect x="643.8" y="26.5" width="14.3" height="5.4" rx="1" fill="#1d74d0" stroke="#cfeaff" stroke-width="0.8"/><rect x="645.5" y="39.4" width="6" height="6" fill="#fff" stroke="#55606b" stroke-width="1"/><rect x="641" y="35.5" width="2" height="1.4" fill="#e8f0f8"/><path d="M658.1 33.4 L664.8 36 V40.2 Q664.8 44.8 658.1 46.8 Q651.5 44.8 651.5 40.2 V36 Z" fill="#fff" stroke="#3a9a4a" stroke-width="1.3"/><path d="M655.6 40.2 L657.6 42.2 L661 38.4" fill="none" stroke="#3a4550" stroke-width="1.2"/><path d="M691.5 22.6 H703.8 L709.5 28.5 V45.7 H691.5 Z" fill="#fff" stroke="#7a7a80" stroke-width="1"/><path d="M703.8 22.6 V28.5 H709.5" fill="none" stroke="#6f6f74" stroke-width="1"/><text x="694.3" y="42.3" font-family="Liberation Serif" font-size="18.4" fill="#2a6fc2" transform="translate(694.3 42.3) scale(0.8 1) translate(-694.3 -42.3)">A</text><path d="M745.7 25.2 V42.4 Q745.7 45.2 755.2 45.2 Q764.7 45.2 764.7 42.4 V25.2 Z" fill="#f7b300"/><ellipse cx="755.2" cy="25.2" rx="9.5" ry="2.8" fill="#f9b800"/><path d="M745.9 26.6 Q755.2 30.6 764.5 26.6" fill="none" stroke="#fde080" stroke-width="0.8"/><circle cx="764.4" cy="39.6" r="4.6" fill="#fff"/><circle cx="764.4" cy="39.6" r="3.7" fill="#e8fbef" stroke="#3a8a40" stroke-width="1.4"/><line x1="761.7" y1="42.4" x2="758" y2="46" stroke="#3a8a40" stroke-width="1.6"/><rect x="796.2" y="23.9" width="19.2" height="19.8" fill="#f8b500"/><path d="M800.8 25.8 H809.8 V24.6 Q809.8 23.8 808.8 23.8 H806.8 Q806.2 21.9 805.3 21.9 Q804.4 21.9 803.8 23.8 H801.8 Q800.8 23.8 800.8 24.6Z" fill="#4f5560"/><path d="M806.5 30.6 H815.8 L820.8 35.3 V47 H806.5 Z" fill="#fff"/><path d="M807.2 31.3 H815.6 L820.1 35.6 V46.3 H807.2 Z" fill="#f4f8fc" stroke="#6e7a88" stroke-width="0.9"/><path d="M815.6 31.3 V35.6 H820.1" fill="none" stroke="#6e7a88" stroke-width="0.8"/><g stroke="#2a6fc2" stroke-width="0.9"><line x1="809.5" y1="33.6" x2="813.5" y2="33.6"/><line x1="809.5" y1="36.3" x2="813.5" y2="36.3"/><line x1="809.5" y1="38.6" x2="818" y2="38.6"/><line x1="809.5" y1="41.3" x2="818" y2="41.3"/><line x1="809.5" y1="43.7" x2="818" y2="43.7"/></g></svg><svg class="a" style="left:0;top:110px;overflow:visible" width="1242" height="40"><g transform="translate(0,-110)"><rect x="17.3" y="123.7" width="12.3" height="11.5" fill="#fff" stroke="#8d98a8" stroke-width="1"/><rect x="16.8" y="123.2" width="13.3" height="3.1" fill="#d9571f"/><text x="18.6" y="134" font-family="Liberation Sans" font-size="8.6" fill="#4a5260" letter-spacing="-0.5">23</text><line x1="1060.4" y1="121.7" x2="1060.4" y2="134.8" stroke="#6a727c" stroke-width="0.9"/><line x1="1065.4" y1="121.7" x2="1065.4" y2="134.8" stroke="#6a727c" stroke-width="0.9"/><line x1="1069.4" y1="121.7" x2="1069.4" y2="134.8" stroke="#6a727c" stroke-width="0.9"/><rect x="1058" y="126" width="4.7" height="2" fill="#1f6cc0"/><rect x="1063.2" y="130.8" width="4.1" height="1.7" fill="#3f4650"/><rect x="1067.1" y="124.3" width="4.6" height="1.8" fill="#1f6cc0"/><circle cx="1106.3" cy="126.9" r="4.3" fill="none" stroke="#1d5fae" stroke-width="1.6"/><line x1="1109.5" y1="130.1" x2="1113.2" y2="133.8" stroke="#1d5fae" stroke-width="1.9"/><path d="M1155.3 130.6 A5.2 5.2 0 1 1 1154.2 125.6" fill="none" stroke="#1b9a9c" stroke-width="1.7"/><path d="M1155.8 122.4 L1156.2 127.4 L1151.4 126.6 Z" fill="#1b9a9c"/><rect x="1187.4" y="122.3" width="11.4" height="11.2" fill="#bfe0ff" stroke="#1d5fc0" stroke-width="1.3"/><rect x="1187" y="122" width="2" height="12" fill="#1d5fc0"/><rect x="1189.8" y="122.9" width="5.6" height="4.6" fill="#f4fbff"/><rect x="1193.3" y="123.6" width="1.6" height="2.2" fill="#1d4fa0"/><rect x="1189.2" y="129" width="4.2" height="4" fill="#e8f4ff"/><path d="M1194.2 127.2 L1191.6 134.2 M1193.6 130.2 L1196.8 133.8 M1191.6 133.2 L1200.2 132.4" fill="none" stroke="#d2482a" stroke-width="1.1"/></g></svg><svg class="a" style="left:0;top:590px;overflow:visible" width="1242" height="33"><g transform="translate(0,-590)"><g fill="#8a8a8a"><path d="M3.3 598.4 L1.3 600.2 L3.3 602 Z"/><path d="M6.6 598.4 L4.6 600.2 L6.6 602 Z"/><path d="M14.9 598.4 L12.9 600.2 L14.9 602 Z"/><path d="M18.0 598.4 L16.0 600.2 L18.0 602 Z"/><path d="M28.6 598.4 L26.6 600.2 L28.6 602 Z"/><path d="M131.0 598.8 L133.3 600.9 L131.0 603 Z"/><path d="M141.0 598.8 L143.3 600.9 L141.0 603 Z"/><path d="M143.8 598.8 L146.10000000000002 600.9 L143.8 603 Z"/><path d="M152.0 598.8 L154.3 600.9 L152.0 603 Z"/><path d="M154.8 598.8 L157.10000000000002 600.9 L154.8 603 Z"/><rect x="157.6" y="598.8" width="1" height="4.2"/></g><g stroke="#56b07a" stroke-width="1.6" fill="none" opacity="0.9"><line x1="1095" y1="611" x2="1095" y2="623"/><path d="M1089.7 615.8 L1095 621.2 L1099.8 615.8"/></g><rect x="1158.1" y="612.8" width="11.9" height="8.2" fill="#f4f8fc"/><rect x="1167.2" y="614" width="1.9" height="1.9" fill="#3a4a5a"/><rect x="1160" y="617.2" width="6.2" height="1.9" fill="#9a9590"/></g></svg><div class="a t" style="left:51.45px;top:-0.11px;font-size:11px;line-height:11px;letter-spacing:1.100px;color:#3c3c3c;">开始</div><div class="a t" style="left:99.45px;top:-0.11px;font-size:11px;line-height:11px;letter-spacing:0.333px;color:#3c3c3c;">文档加密</div><div class="a t" style="left:169.85px;top:-0.11px;font-size:11px;line-height:11px;letter-spacing:0.200px;color:#3c3c3c;">上网行为</div><div class="a t" style="left:239.45px;top:-0.11px;font-size:11px;line-height:11px;letter-spacing:0.367px;color:#3c3c3c;">数据安全</div><div class="a t" style="left:310.45px;top:-0.11px;font-size:11px;line-height:11px;letter-spacing:-0.100px;color:#3c3c3c;">设备管理</div><div class="a t" style="left:380.05px;top:-0.11px;font-size:11px;line-height:11px;letter-spacing:0.789px;color:#3c3c3c;">系统&amp;网络</div><div class="a t" style="left:458.85px;top:-0.11px;font-size:11px;line-height:11px;letter-spacing:0.400px;color:#3c3c3c;">运维中心</div><div class="a t" style="left:529.85px;top:-0.11px;font-size:11px;line-height:11px;letter-spacing:0.233px;color:#3c3c3c;">报表中心</div><div class="a t" style="left:599.45px;top:-0.11px;font-size:11px;line-height:11px;letter-spacing:0.367px;color:#3c3c3c;">更多功能</div><div class="a t" style="left:11.12px;top:53.13px;font-size:9.65px;line-height:9.65px;letter-spacing:1.689px;color:#454545;">概 览</div><div class="a t" style="left:59.82px;top:53.13px;font-size:9.65px;line-height:9.65px;letter-spacing:1.489px;color:#454545;">策 略</div><div class="a t" style="left:109.02px;top:53.13px;font-size:9.65px;line-height:9.65px;letter-spacing:1.139px;color:#454545;">告 警</div><div class="a t" style="left:149.32px;top:53.13px;font-size:9.65px;line-height:9.65px;letter-spacing:-0.412px;color:#454545;">审批任务</div><div class="a t" style="left:201.22px;top:53.13px;font-size:9.65px;line-height:9.65px;letter-spacing:-0.178px;color:#454545;">流转追溯</div><div class="a t" style="left:247.92px;top:53.13px;font-size:9.65px;line-height:9.65px;letter-spacing:-0.178px;color:#454545;">泄密追踪</div><div class="a t" style="left:295.02px;top:53.13px;font-size:9.65px;line-height:9.65px;letter-spacing:0.088px;color:#454545;">文件操作</div><div class="a t" style="left:340.82px;top:53.13px;font-size:9.65px;line-height:9.65px;letter-spacing:-0.267px;color:#454545;">敏感内容扫描</div><div class="a t" style="left:405.52px;top:53.13px;font-size:9.65px;line-height:9.65px;letter-spacing:-0.147px;color:#454545;">文件外发管控</div><div class="a t" style="left:479.02px;top:53.13px;font-size:9.65px;line-height:9.65px;letter-spacing:-0.178px;color:#454545;">屏幕记录</div><div class="a t" style="left:527.02px;top:53.13px;font-size:9.65px;line-height:9.65px;letter-spacing:0.088px;color:#454545;">屏幕水印</div><div class="a t" style="left:583.52px;top:53.13px;font-size:9.65px;line-height:9.65px;letter-spacing:-0.145px;color:#454545;">打印审计</div><div class="a t" style="left:631.52px;top:53.13px;font-size:9.65px;line-height:9.65px;letter-spacing:-0.012px;color:#454545;">打印管控</div><div class="a t" style="left:680.82px;top:53.13px;font-size:9.65px;line-height:9.65px;letter-spacing:-0.112px;color:#454545;">打印水印</div><div class="a t" style="left:735.22px;top:53.13px;font-size:9.65px;line-height:9.65px;letter-spacing:-0.245px;color:#454545;">文件备份</div><div class="a t" style="left:783.52px;top:53.13px;font-size:9.65px;line-height:9.65px;letter-spacing:-0.009px;color:#454545;">剪切板记录</div><div class="a t" style="left:85.72px;top:87.03px;font-size:9.65px;line-height:9.65px;letter-spacing:-0.435px;color:#585858;">概览</div><div class="a t" style="left:312.82px;top:87.03px;font-size:9.65px;line-height:9.65px;letter-spacing:-0.178px;color:#585858;">文件安全</div><div class="a t" style="left:503.52px;top:87.03px;font-size:9.65px;line-height:9.65px;letter-spacing:0.055px;color:#585858;">屏幕安全</div><div class="a t" style="left:631.52px;top:87.03px;font-size:9.65px;line-height:9.65px;letter-spacing:-0.012px;color:#585858;">打印安全</div><div class="a t" style="left:764.02px;top:87.03px;font-size:9.65px;line-height:9.65px;letter-spacing:-0.112px;color:#585858;">其他安全</div><div class="a t" style="left:32.32px;top:125.13px;font-size:9.65px;line-height:9.65px;letter-spacing:-0.545px;color:#4a4a4a;">最近一月</div><div class="a t" style="left:1073.92px;top:124.93px;font-size:9.65px;line-height:9.65px;letter-spacing:-0.435px;color:#505050;">策略</div><div class="a t" style="left:1116.72px;top:124.93px;font-size:9.65px;line-height:9.65px;letter-spacing:-0.035px;color:#505050;">搜索</div><div class="a t" style="left:1159.22px;top:124.93px;font-size:9.65px;line-height:9.65px;letter-spacing:-0.135px;color:#505050;">刷新</div><div class="a t" style="left:1201.52px;top:124.93px;font-size:9.65px;line-height:9.65px;letter-spacing:0.465px;color:#505050;">导出</div><div class="a t" style="left:-0.38px;top:156.83px;font-size:9.65px;line-height:9.65px;letter-spacing:0.165px;color:#707070;">分组</div><div class="a t" style="left:71.50px;top:156.83px;font-size:9.65px;line-height:9.65px;letter-spacing:0.000px;color:#707070;">终端名</div><div class="a t" style="left:185.10px;top:156.83px;font-size:9.65px;line-height:9.65px;letter-spacing:0.000px;color:#707070;">操作用户</div><div class="a t" style="left:282.10px;top:156.83px;font-size:9.65px;line-height:9.65px;letter-spacing:0.000px;color:#707070;">操作</div><div class="a t" style="left:379.30px;top:156.83px;font-size:9.65px;line-height:9.65px;letter-spacing:0.000px;color:#707070;">源路径</div><div class="a t" style="left:709.00px;top:156.83px;font-size:9.65px;line-height:9.65px;letter-spacing:0.000px;color:#707070;">目标路径</div><div class="a t" style="left:1048.50px;top:156.83px;font-size:9.65px;line-height:9.65px;letter-spacing:0.000px;color:#707070;">操作时间</div><div class="a t" style="left:1153.00px;top:156.83px;font-size:9.65px;line-height:9.65px;letter-spacing:0.000px;color:#707070;">U盘</div><div class="a t" style="left:45.82px;top:596.33px;font-size:9.65px;line-height:9.65px;letter-spacing:0.365px;color:#404040;">记录</div><div class="a t" style="left:68.80px;top:595.65px;font-size:10.1px;line-height:10.1px;letter-spacing:0.256px;color:#404040;">1 of 1169</div><div class="a t" style="left:3.12px;top:613.13px;font-size:9.65px;line-height:9.65px;letter-spacing:-0.135px;color:#ffffff;">就绪</div><div class="a t" style="left:1105.52px;top:613.13px;font-size:9.65px;line-height:9.65px;letter-spacing:-0.178px;color:#ffffff;">任务中心</div><div class="a t" style="left:1174.99px;top:612.75px;font-size:10.1px;line-height:10.1px;letter-spacing:0.276px;color:#f0f8ff;">13</div><div class="a t" style="left:1186.32px;top:613.13px;font-size:9.65px;line-height:9.65px;letter-spacing:-0.309px;color:#f0f8ff;">条未读信息</div>
</body></html>
